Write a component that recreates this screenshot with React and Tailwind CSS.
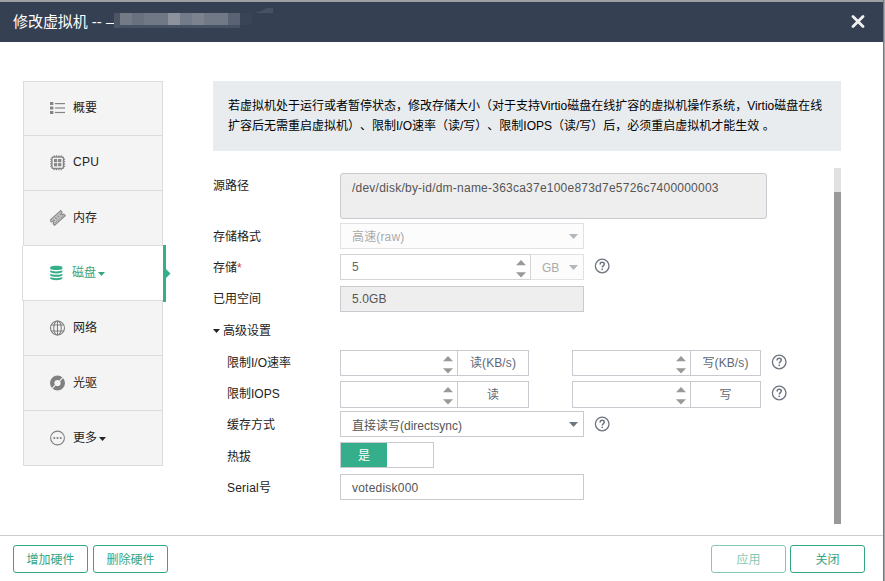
import React from "react";

const Svg = ({ children, className = "" }) => (
  <svg width="16" height="16" viewBox="0 0 16 16" fill="none" className={"shrink-0 " + className}>
    {children}
  </svg>
);

const ListIcon = () => (
  <Svg>
    <g fill="#858585">
      <rect x="0" y="2" width="3.4" height="3" />
      <rect x="0" y="6.5" width="3.4" height="3" />
      <rect x="0" y="11" width="3.4" height="3" />
      <rect x="5" y="3" width="10" height="1.2" />
      <rect x="5" y="7.4" width="10" height="1.2" />
      <rect x="5" y="11.9" width="10" height="1.2" />
    </g>
  </Svg>
);

const CpuIcon = () => (
  <Svg>
    <rect x="1.9" y="1.9" width="11.6" height="11.6" rx="1.5" stroke="#858585" strokeWidth="1.5" />
    <path d="M4.2 0.2v1.5M6.5 0.2v1.5M8.9 0.2v1.5M11.2 0.2v1.5M4.2 13.7v1.5M6.5 13.7v1.5M8.9 13.7v1.5M11.2 13.7v1.5M0.2 4.2h1.5M0.2 6.5h1.5M0.2 8.9h1.5M0.2 11.2h1.5M13.7 4.2h1.5M13.7 6.5h1.5M13.7 8.9h1.5M13.7 11.2h1.5" stroke="#858585" strokeWidth="1.1" />
    <g fill="#858585">
      <rect x="4" y="4" width="3.2" height="3.2" />
      <rect x="8.1" y="4" width="3.2" height="3.2" />
      <rect x="4" y="8.1" width="3.2" height="3.2" />
      <rect x="8.1" y="8.1" width="3.2" height="3.2" />
    </g>
  </Svg>
);

const MemoryIcon = () => (
  <Svg>
    <g transform="rotate(-42 7.6 8)">
      <path d="M0.4 4.6h14.4v2.1a1.3 1.3 0 0 0 0 2.6v2.1H0.4V9.3a1.3 1.3 0 0 0 0-2.6z" fill="#c4c4c4" stroke="#8a8a8a" strokeWidth="1.1" />
      <path d="M3.2 6.2v2M6.2 6.2v2M9.2 6.2v2M12.2 6.2v2" stroke="#858585" strokeWidth="1.2" />
      <path d="M2.2 9.8h11" stroke="#8a8a8a" strokeDasharray="1 1" />
    </g>
  </Svg>
);

const DiskIcon = () => (
  <Svg>
    <g fill="#35af8b">
      <path d="M1.2 2.2C1.2 0.2 13.4 0.2 13.4 2.2v1.4c0 2-12.2 2-12.2 0z" />
      <path d="M1.2 5.3c2 1.5 10.2 1.5 12.2 0v1.8c-1.2 1.7-11 1.7-12.2 0z" />
      <path d="M1.2 8.7c2 1.5 10.2 1.5 12.2 0v1.8c-1.2 1.7-11 1.7-12.2 0z" />
      <path d="M1.2 12.1c2 1.5 10.2 1.5 12.2 0v1.4c-1.2 2.2-11 2.2-12.2 0z" />
    </g>
  </Svg>
);

const GlobeIcon = () => (
  <Svg>
    <g stroke="#808080" strokeWidth="1.1">
      <circle cx="7.5" cy="8" r="7" />
      <ellipse cx="7.5" cy="8" rx="3.8" ry="7" />
      <path d="M7.5 1v14M1.3 5h12.4M1.3 11h12.4" />
    </g>
  </Svg>
);

const DiscIcon = () => (
  <Svg>
    <circle cx="7.5" cy="8" r="5.3" stroke="#808080" strokeWidth="4.4" />
    <path d="M9.7 5.8l3-3.2M5.3 10.2l-3 3.2" stroke="#f4f4f4" strokeWidth="1.1" />
  </Svg>
);

const MoreIcon = () => (
  <Svg>
    <circle cx="7.5" cy="8" r="6.9" stroke="#808080" strokeWidth="1.1" />
    <g fill="#808080">
      <circle cx="4.3" cy="8" r="1.1" />
      <circle cx="7.5" cy="8" r="1.1" />
      <circle cx="10.7" cy="8" r="1.1" />
    </g>
  </Svg>
);

const HelpIcon = ({ className }) => (
  <Svg className={className}>
    <circle cx="8.2" cy="8" r="6.8" stroke="#6d7480" strokeWidth="1.3" />
    <path d="M6.1 6.4c0-1.4 0.9-2.2 2.1-2.2s2.1 0.8 2.1 1.9c0 1.5-2 1.6-2 3.3" stroke="#6d7480" strokeWidth="1.5" />
    <rect x="7.5" y="10.6" width="1.5" height="1.5" fill="#6d7480" />
  </Svg>
);

const Caret = ({ className = "" }) => (
  <svg width="9" height="5" viewBox="0 0 9 5" className={"shrink-0 " + className}>
    <path d="M0 0h9L4.5 5z" fill="currentColor" />
  </svg>
);

const SmallCaret = ({ className = "" }) => (
  <svg width="7" height="4" viewBox="0 0 7 4" className={"shrink-0 " + className}>
    <path d="M0 0h7L3.5 4z" fill="currentColor" />
  </svg>
);

const Spinner = () => (
  <svg width="10" height="18" viewBox="0 0 10 18" className="mt-[3px] shrink-0 text-[#999]">
    <path d="M0 5.2h10L5 0z M0 12.2h10L5 17.4z" fill="currentColor" />
  </svg>
);

const items = [
  { label: "概要", Icon: ListIcon },
  { label: "CPU", Icon: CpuIcon, latin: true },
  { label: "内存", Icon: MemoryIcon },
  { label: "磁盘", Icon: DiskIcon, active: true, caret: true },
  { label: "网络", Icon: GlobeIcon },
  { label: "光驱", Icon: DiscIcon },
  { label: "更多", Icon: MoreIcon, caret: true },
];

function Sidebar() {
  return (
    <nav className="mt-[39px] ml-[23px] h-[385px] w-[140px] shrink-0 border-t border-[#dcdcdc]">
      {items.map(({ label, Icon, active, caret, latin }, i) => (
        <div
          key={label}
          className={
            "relative flex items-center border-b border-l border-[#dcdcdc] pb-px pl-[26px] " +
            (i === 0 ? "h-[54px] " : "h-[55px] ") +
            (active
              ? "-ml-px w-[141px] bg-white text-[#35a583]"
              : "w-[140px] border-r bg-[#f4f4f4] text-[#222]")
          }
        >
          <Icon />
          <span className={"ml-[7px] " + (latin ? "-mt-px tracking-[0.3px]" : "")}>{label}</span>
          {caret && <SmallCaret className="ml-0.5 mt-[3px]" />}
          {active && (
            <svg width="8" height="57" viewBox="0 0 8 57" className="absolute -top-px left-[140px]">
              <path d="M0 0h3v24l4.5 4.5L3 33v24H0z" fill="#35af8b" />
            </svg>
          )}
        </div>
      ))}
    </nav>
  );
}

const Row = ({ label, sub, low, children, className = "" }) => (
  <div className={"flex " + className}>
    <div
      className={
        "h-[26px] shrink-0 text-[#222] " +
        (low ? "leading-[28px] " : "leading-[26px] ") +
        (sub ? "ml-[14px] w-[113px]" : "w-[127px]")
      }
    >
      {label}
    </div>
    {children}
  </div>
);

const RateBox = ({ unit, className = "", first }) => (
  <div className={"flex border border-[#c9c9cf] bg-white " + className}>
    <div className={"flex items-center justify-end border-r border-[#c9c9cf] pr-1 " + (first ? "w-[117px]" : "w-[118px]")}>
      <Spinner />
    </div>
    <div className="flex flex-1 items-center justify-center text-[#606875]">{unit}</div>
  </div>
);

const Button = ({ children, className = "" }) => (
  <button className={"flex h-7 w-[75px] items-center justify-center rounded-[3px] border border-[#35a583] bg-white pt-0.5 text-[#35a583] " + className}>
    {children}
  </button>
);

export default function App() {
  return (
    <div className="flex h-[581px] w-[885px] overflow-hidden bg-white font-['Liberation_Sans','Noto_Sans_CJK_SC',sans-serif] text-xs text-[#222] [text-spacing-trim:space-all]">
      <div className="flex w-[883px] shrink-0 flex-col">
        <header className="flex h-[42px] shrink-0 items-center border-t-2 border-[#9da1a3] bg-[#354053] pl-[13px] text-[15px] text-white">
          <span className="w-[101px] whitespace-nowrap leading-5 tracking-[-0.05px]">修改虚拟机 -- –</span>
          <svg width="160" height="24" viewBox="0 0 160 24" className="-mt-[13px]">
            <rect x="0" y="9" width="6" height="15" fill="#4b5565" />
            <rect x="6" y="9" width="12" height="12" fill="#747b87" />
            <rect x="18" y="9" width="12" height="12" fill="#69707e" />
            <rect x="30" y="9" width="24" height="12" fill="#717885" />
            <rect x="54" y="9" width="12" height="12" fill="#8e929d" />
            <rect x="66" y="9" width="12" height="12" fill="#747b88" />
            <rect x="78" y="9" width="12" height="12" fill="#7d838e" />
            <rect x="90" y="9" width="24" height="12" fill="#717986" />
            <rect x="114" y="9" width="12" height="12" fill="#596373" />
            <rect x="126" y="9" width="12" height="12" fill="#394456" />
            <rect x="6" y="21" width="120" height="3" fill="#465163" />
            <path d="M141 9l6-2 6-3h6v5z" fill="#465163" />
          </svg>
          <svg width="14" height="13" viewBox="0 0 14 13" className="-mt-px ml-auto mr-[18px]">
            <path d="M2 1.5l10 10M12 1.5l-10 10" stroke="#f1f1f1" strokeWidth="2.8" strokeLinecap="round" />
          </svg>
        </header>

        <main className="flex h-[493px] shrink-0">
          <Sidebar />
          <section className="ml-[50px] mt-[39px] w-[628px]">
            <div className="h-[70px] bg-[#e8ecef] pl-[15px] pt-[15px] leading-5 text-black">
              <p className="whitespace-nowrap">若虚拟机处于运行或者暂停状态，修改存储大小（对于支持Virtio磁盘在线扩容的虚拟机操作系统，Virtio磁盘在线</p>
              <p className="whitespace-nowrap">扩容后无需重启虚拟机）、限制I/O速率（读/写）、限制IOPS（读/写）后，必须重启虚拟机才能生效 。</p>
            </div>

            <div className="mt-[17px] flex h-[356px] justify-between">
              <div className="pt-[5px]">
                <Row label="源路径">
                  <div className="h-[46px] w-[427px] rounded-[3px] border border-[#c9c9cf] bg-[#eee] pl-[11px] leading-7 tracking-[0.23px] text-[#555]">
                    /dev/disk/by-id/dm-name-363ca37e100e873d7e5726c7400000003
                  </div>
                </Row>
                <Row label="存储格式" low className="mt-1">
                  <div className="flex h-[26px] w-[244px] items-center justify-between border border-[#e1e1e4] bg-[#fcfcfc] pl-[11px] pr-[5px] text-[#aaa]">
                    <span className="pt-0.5 tracking-[0.15px]">高速(raw)</span>
                    <Caret className="text-[#b1b7ba]" />
                  </div>
                </Row>
                <Row label={<>存储<span className="text-[#c33]">*</span></>} low className="mt-[5px]">
                  <div className="flex h-[26px] w-[191px] items-center justify-between border border-[#d3d3d8] pl-[11px] pr-1 text-[#666]">
                    <span>5</span>
                    <Spinner />
                  </div>
                  <div className="flex h-[26px] w-[53px] items-center justify-between border border-l-0 border-[#e1e1e4] bg-[#fcfcfc] pl-[11px] pr-[5px] text-[#aaa]">
                    <span className="pt-px">GB</span>
                    <Caret className="text-[#b1b7ba]" />
                  </div>
                  <HelpIcon className="ml-[10px] mt-1" />
                </Row>
                <Row label="已用空间" className="mt-1.5">
                  <div className="h-[26px] w-[244px] border border-[#c9c9cf] bg-[#eee] pl-[11px] leading-6 tracking-[0.1px] text-[#555]">5.0GB</div>
                </Row>
                <div className="mt-[5px] flex h-[26px] items-center pt-0.5 text-[#222]">
                  <SmallCaret className="mr-[3px]" />
                  高级设置
                </div>
                <Row label="限制I/O速率" sub className="mt-[7px]">
                  <RateBox unit={<span className="tracking-[0.1px]">读(KB/s)</span>} className="h-[26px] w-[189px]" first />
                  <RateBox unit={<span className="tracking-[0.1px]">写(KB/s)</span>} className="ml-[43px] h-[26px] w-[189px]" />
                  <HelpIcon className="ml-[10px] mt-1" />
                </Row>
                <Row label="限制IOPS" sub className="mt-[5px]">
                  <RateBox unit="读" className="h-[27px] w-[189px]" first />
                  <RateBox unit="写" className="ml-[43px] h-[27px] w-[189px]" />
                  <HelpIcon className="ml-[10px] mt-1" />
                </Row>
                <Row label="缓存方式" sub low className="mt-[3px]">
                  <div className="flex h-[26px] w-[244px] items-center justify-between border border-[#c9c9cf] pl-[11px] pr-[5px] text-[#555]">
                    <span className="pt-1">直接读写(directsync)</span>
                    <Caret className="text-[#6d777f]" />
                  </div>
                  <HelpIcon className="ml-[10px] mt-[5px]" />
                </Row>
                <Row label={<span className="block pt-px">热拔</span>} sub low className="mt-[5px]">
                  <div className="flex h-[26px] w-[94px] border border-[#c9c9cf]">
                    <div className="w-[46px] bg-[#35af8b] text-center leading-[26px] text-white">是</div>
                  </div>
                </Row>
                <Row label={<span className="tracking-[0.2px]">Serial号</span>} sub low className="mt-1.5">
                  <div className="h-[26px] w-[244px] border border-[#c9c9cf] pl-[11px] leading-[26px] tracking-[0.22px] text-[#555]">votedisk000</div>
                </Row>
              </div>
              <div className="h-[356px] w-[7px] bg-[#e1e1e1] pt-6">
                <div className="h-full bg-[#999]" />
              </div>
            </div>
          </section>
        </main>

        <footer className="flex h-[46px] shrink-0 gap-[5px] border-t border-[#ccc] pl-[13px] pr-[18px] pt-[9px]">
          <Button>增加硬件</Button>
          <Button>删除硬件</Button>
          <div className="ml-auto flex gap-1">
            <Button className="opacity-60">应用</Button>
            <Button>关闭</Button>
          </div>
        </footer>
      </div>
      <div className="w-0.5 border-l border-[#777] bg-[#a5a7a9]" />
    </div>
  );
}
